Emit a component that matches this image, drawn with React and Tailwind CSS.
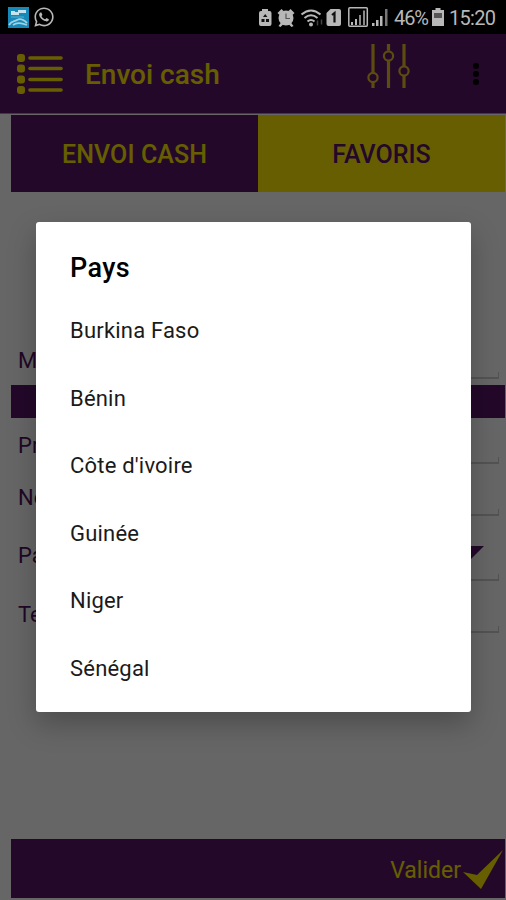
import React from "react";
import { FaWhatsapp } from "react-icons/fa";

const countries = ["Burkina Faso", "Bénin", "Côte d'ivoire", "Guinée", "Niger", "Sénégal"];

const StatusBar = () => (
  <div className="h-[34px] shrink-0 bg-black flex items-center justify-between pl-[8px] pr-[10px] text-[#b8b8b8]">
    <div className="flex items-center gap-[4px]">
      <svg width="21" height="21" viewBox="0 0 21 21">
        <rect width="21" height="21" fill="#1689b8" />
        <path d="M3 4h4v1h3v-2h8v3h-7v2H3z" fill="#c5e3ed" />
        <path d="M1 18c3-5 5-3 8-5s6-1 10 3M5 18c4-3 8-2 14 0" fill="none" stroke="#9fd0e3" strokeWidth="1.8" />
        <path d="M3 10h13" stroke="#58afd0" strokeWidth="1" />
      </svg>
      <FaWhatsapp size={22} />
    </div>

    <div className="flex items-center">
      <svg width="135" height="24" viewBox="0 0 135 24" fill="currentColor">
        {/* Battery saver */}
        <path d="M3 4h6v2h1.500q2 0 2 2v11q0 2-2 2H2q-2 0-2-2V8q0-2 2-2h1z" />
        <path d="M6.200 9l2.200 3H4zM2.500 14h3v3h-3zM7 14h3v3H7z" fill="#111" />
        {/* Alarm */}
        <circle cx="27" cy="13" r="7.500" />
        <path d="M18.500 8l4-4 2 2-4 4zM35.500 8l-4-4-2 2 4 4zM19.500 21l3-4 2 2-3 3zM34.500 21l-3-4-2 2 3 3z" />
        <path d="M27 8.500V13.500h4" fill="none" stroke="#555" strokeWidth="1.200" />
        {/* Wifi */}
        <g fill="none" stroke="currentColor" strokeWidth="2">
          <path d="M42.500 9.500q9.500-8 19 0M45.500 13q6.500-5.500 13 0M48.500 16.500q3.500-3 7 0" />
        </g>
        <circle cx="52" cy="19.500" r="2" />
        <path d="M58.500 15.500v5M62.500 14.500v5" stroke="#444" strokeWidth="1.500" />
        {/* SIM 1 */}
        <path d="M67.500 8l4-4H80q2 0 2 2v13q0 2-2 2H69.500q-2 0-2-2z" />
        <path d="M73 10l2.500-2v9.500" fill="none" stroke="#111" strokeWidth="2.200" />
        {/* Boxed signal */}
        <rect x="89.800" y="2.800" width="18.500" height="18.500" rx="1" fill="none" stroke="currentColor" strokeWidth="1.500" />
        <path d="M92 17h2v3h-2zM96 14h2v6h-2z" />
        <path d="M100 10h2v10h-2zM104 5.500h2V20h-2z" fill="#888" />
        {/* Signal */}
        <path d="M113 18h2.500v3H113zM117 15h2.500v6H117zM121 11h2.500v10H121z" />
        <path d="M126 4h2.500v17H126z" fill="#777" />
      </svg>
      <span className="w-[36px] text-[20px] leading-none tracking-[-1.1px] pt-[2px]">46%</span>
      <svg width="12" height="20" viewBox="0 0 12 20" className="ml-[2px] mr-[5px]">
        <path d="M3.500 1h5v2H12v16H0V3h3.500z" fill="#b8b8b8" />
        <path d="M2 6h8v5H2z" fill="#555" />
      </svg>
      <span className="w-[47px] text-[20px] leading-none tracking-[-0.7px] pt-[2px]">15:20</span>
    </div>
  </div>
);

const MenuIcon = () => (
  <svg width="48" height="42" viewBox="0 0 48 42" fill="#ffeb00" stroke="#ffeb00">
    {[5, 15.500, 26.500, 37].map((y) => (
      <g key={y}>
        <rect x="1" y={y - 4} width="8" height="8" rx="3" stroke="none" />
        <path d={`M14 ${y}h31`} strokeWidth="3.600" strokeLinecap="round" />
      </g>
    ))}
  </svg>
);

const SlidersIcon = () => (
  <svg width="44" height="46" viewBox="0 0 44 46" fill="none" stroke="#e8bd28">
    <path d="M6 1v28.500M6 39.500V45M21.500 1v6.500M21.500 17.500V45M37 1v22M37 33v12" strokeWidth="3.200" />
    <g strokeWidth="2.200">
      <circle cx="6" cy="34.500" r="4.600" />
      <circle cx="21.500" cy="13" r="4.600" />
      <circle cx="37" cy="28" r="4.600" />
    </g>
  </svg>
);

const Field = ({ label, className, labelClassName = "pb-[5px]", children }) => (
  <div className={`ml-[7px] mr-[6px] flex items-end ${className}`}>
    <span className={`w-[110px] shrink-0 text-[22px] leading-[26px] text-[#521360] ${labelClassName}`}>{label}</span>
    <div className="flex-1 h-[7px] border-b-2 border-r border-[#cfcfcf] relative">{children}</div>
  </div>
);

export default function App() {
  return (
    <div className="w-[506px] h-[900px] overflow-hidden flex flex-col bg-white font-['Roboto',sans-serif]">
      <StatusBar />

      <div className="relative flex-1 flex flex-col">
        <header className="h-[79px] shrink-0 bg-[#591469] flex items-center pl-[16px] pr-[27px]">
          <MenuIcon />
          <h1 className="ml-[21px] pt-[2px] text-[28px] font-medium leading-none text-[#ffeb00]">Envoi cash</h1>
          <div className="ml-auto mb-[15px] mr-[62px]">
            <SlidersIcon />
          </div>
          <div className="flex flex-col gap-[2px]">
            <span className="size-[6px] rounded-full bg-black" />
            <span className="size-[6px] rounded-full bg-black" />
            <span className="size-[6px] rounded-full bg-black" />
          </div>
        </header>

        <main className="flex-1 flex flex-col pl-[11px] pr-px pt-px border-t border-[#ad89b4]">
          <div className="h-[77px] flex text-[25px] font-medium">
            <button className="w-[247px] pt-[3px] bg-[#591469] text-[#ffeb00] tracking-[0.1px]">ENVOI CASH</button>
            <button className="flex-1 pt-[3px] bg-[#ffeb00] text-[#591469]">FAVORIS</button>
          </div>

          <Field label="Montant" className="h-[187px]" />
          <div className="h-[33px] mt-[6px] bg-[#591469]" />
          <Field label="Prénom" className="h-[46px]" />
          <Field label="Nom" className="h-[52px]" />
          <Field label="Pays" className="h-[65px]" labelClassName="pb-[12px]">
            <svg width="28" height="14" viewBox="0 0 28 14" className="absolute right-[14px] bottom-[19px]">
              <path d="M0 0h28L14 14z" fill="#591469" />
            </svg>
          </Field>
          <Field label="Tel" className="h-[52px]" />

          <button className="mt-auto mb-[2px] h-[59px] bg-[#591469] flex items-center justify-end text-[23px] text-[#ffeb00]">
            <span className="pt-[6px]">Valider</span>
            <svg width="44" height="44" viewBox="0 0 44 44" className="mt-[3px]">
              <path d="M2 24l14 3L42 2 20 41z" fill="#ffeb00" />
            </svg>
          </button>
        </main>

        {/* Dim layer with the country dialog on top */}
        <div className="absolute inset-0 bg-black/60">
          <div className="mt-[188px] ml-[36px] w-[435px] h-[490px] rounded-[3px] bg-white pl-[34px] pt-[30px] shadow-[0_12px_28px_rgba(0,0,0,0.25)]">
            <h2 className="text-[27px] leading-[32px] font-medium tracking-[0.4px] text-black">Pays</h2>
            <ul className="mt-[13px]">
              {countries.map((country) => (
                <li key={country} className="h-[67.5px] flex items-center text-[22px] tracking-[0.2px] text-[#1a1a1a]">
                  {country}
                </li>
              ))}
            </ul>
          </div>
        </div>
      </div>
    </div>
  );
}
